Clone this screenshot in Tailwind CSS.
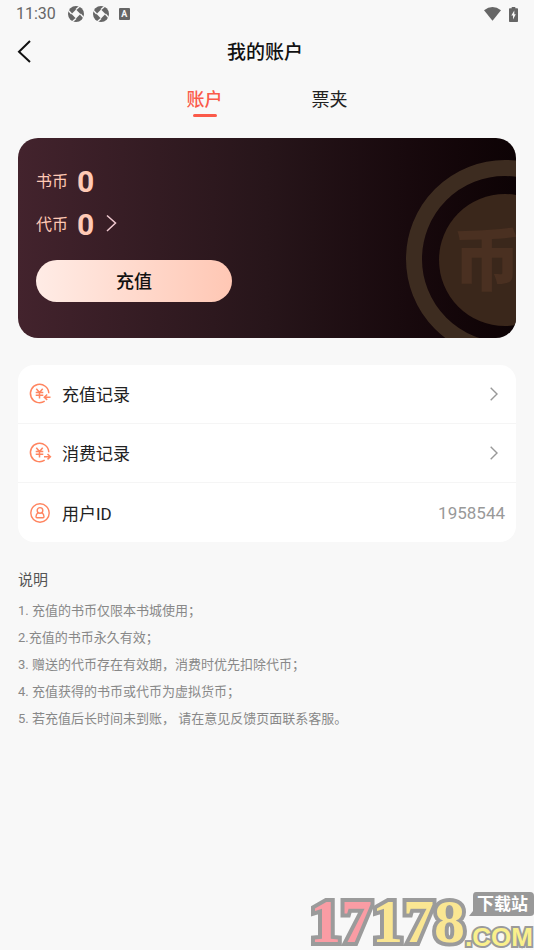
<!DOCTYPE html>
<html lang="zh-CN">
<head>
<meta charset="utf-8">
<meta name="viewport" content="width=device-width, initial-scale=1">
<title>我的账户</title>
<script src="https://cdn.jsdelivr.net/npm/@tailwindcss/browser@4"></script>
</head>
<body class="relative min-h-screen bg-[#f8f8f8] font-['Roboto','Noto_Sans_CJK_SC',sans-serif] text-[#222]">
  <!-- Status bar -->
  <div class="flex h-7 items-center justify-between px-4 text-[#666]">
    <div class="flex items-center gap-2">
      <span class="mr-1 text-base leading-7">11:30</span>
      <svg class="size-4" viewBox="0 0 16 16" aria-hidden="true"><circle cx="8" cy="8" r="8" fill="currentColor"/><path d="M8 3.600 12.400 8 8 12.400 3.600 8Z" fill="#f8f8f8"/><path d="M8 3.600 12 0M12.400 8 16 12M8 12.400 4 16M3.600 8 0 4" stroke="#f8f8f8" stroke-width="1.400"/></svg>
      <svg class="ml-px size-4" viewBox="0 0 16 16" aria-hidden="true"><circle cx="8" cy="8" r="8" fill="currentColor"/><path d="M8 3.600 12.400 8 8 12.400 3.600 8Z" fill="#f8f8f8"/><path d="M8 3.600 12 0M12.400 8 16 12M8 12.400 4 16M3.600 8 0 4" stroke="#f8f8f8" stroke-width="1.400"/></svg>
      <span class="ml-0.5 flex h-3 w-[11px] items-center justify-center rounded-[1px] bg-[#666] text-[9px] font-bold leading-3 text-[#f8f8f8]">A</span>
    </div>
    <div class="flex items-center gap-2">
      <svg class="h-[14px] w-[17px]" viewBox="0 0 17 14" fill="currentColor" aria-hidden="true"><path d="M0 3.200Q8.500-3 17 3.200L8.500 13.800Z"/></svg>
      <svg class="h-[15px] w-[9px]" viewBox="0 0 9 15" aria-hidden="true"><path fill="currentColor" d="M2.700 0h3.600v1.200H8.200q.8 0 .8.800v12.200q0 .8-.8.800H.8q-.8 0-.8-.8V2q0-.8.8-.8h1.900Z"/><path fill="#f8f8f8" d="M5.300 3.600 2.300 8.500H4v3.900L6.800 7.300H5.300Z"/></svg>
    </div>
  </div>

  <!-- Title bar -->
  <header class="grid h-12 grid-cols-[1fr_auto_1fr] items-center pr-5 pl-4">
    <button type="button" aria-label="返回" class="w-6 justify-self-start">
      <svg class="h-6 w-4" viewBox="0 0 16 24" fill="none" stroke="#111" stroke-width="2" aria-hidden="true"><path d="M14 1 3 11.800 14 22"/></svg>
    </button>
    <h1 class="pt-0.5 text-[19px] font-medium leading-7 text-[#111]">我的账户</h1>
  </header>

  <nav class="flex h-[62px] justify-center gap-[89px] pt-2.5 text-lg leading-7">
    <a href="#account" aria-current="page" class="flex flex-col items-center font-medium text-[#fb5a4a]">账户<span class="h-[3px] w-6 rounded-full bg-[#fb5a4a]"></span></a>
    <a href="#coupons">票夹</a>
  </nav>

  <main class="px-[18px]">
    <!-- Balance card -->
    <section id="account" class="relative overflow-hidden rounded-[20px] bg-linear-to-r from-[#43232d] via-[#27151a] to-[#0d0305] px-[18px] pt-7 pb-9 text-[#ffc9b5]">
      <svg class="absolute top-0 right-0 h-full w-[120px]" viewBox="0 0 120 200" aria-hidden="true">
        <circle cx="109" cy="121" r="91" fill="none" stroke="#3d2c20" stroke-width="16"/>
        <circle cx="109" cy="122" r="66" fill="#3a271b"/>
        <text x="57" y="147" font-size="68" font-weight="900" font-family="'Noto Sans CJK SC', sans-serif" fill="#4a3021">币</text>
      </svg>
      <div class="relative">
        <div class="flex h-[43px] items-start gap-[9px]"><span class="text-base leading-8">书币</span><b class="text-[30px] leading-8">0</b></div>
        <a href="#tokens" class="flex h-[43px] items-start gap-[9px]"><span class="text-base leading-8">代币</span><b class="text-[30px] leading-8">0</b>
          <svg class="mt-[5px] ml-0.5 h-[18px] w-3" viewBox="0 0 12 18" fill="none" stroke="#f0c9d0" stroke-width="1.500" aria-hidden="true"><path d="M2 1.500 10.500 9 2 17"/></svg></a>
        <button type="button" class="mt-2 h-[42px] w-[196px] rounded-full bg-linear-to-r from-[#ffece6] to-[#ffc7b4] pt-0.5 text-lg font-medium text-[#111]">充值</button>
      </div>
    </section>

    <!-- Records -->
    <section class="mt-[27px] divide-y divide-[#f5f5f5] overflow-hidden rounded-2xl bg-white text-[17px] leading-6">
      <a href="#recharges" class="flex h-[59px] items-center gap-3 pr-[18px] pl-3">
        <svg class="size-5 overflow-visible" viewBox="0 0 20 20" fill="none" stroke="#ff8560" stroke-width="1.500" aria-hidden="true"><path d="M18.800 9.200A9.200 9.200 0 1 0 14.700 17.200M6.300 4.800l3.200 3.700 3.200-3.700M5.700 8.500h7.600M5.700 11.200h7.600M9.500 8.500v6M20.500 13.200h-5.800M17.200 10.500l-2.900 2.700 2.900 2.700"/></svg>
        <span class="grow pt-0.5">充值记录</span>
        <svg class="h-[14px] w-2" viewBox="0 0 8 14" fill="none" stroke="#999" stroke-width="1.400" aria-hidden="true"><path d="M.7.7 7 7 .7 13.300"/></svg>
      </a>
      <a href="#spending" class="flex h-[59px] items-center gap-3 pr-[18px] pl-3">
        <svg class="size-5 overflow-visible" viewBox="0 0 20 20" fill="none" stroke="#ff8560" stroke-width="1.500" aria-hidden="true"><path d="M18.800 9.200A9.200 9.200 0 1 0 14.700 17.200M6.300 4.800l3.200 3.700 3.200-3.700M5.700 8.500h7.600M5.700 11.200h7.600M9.500 8.500v6M14 13.700h6M17.500 11l2.900 2.700-2.900 2.700"/></svg>
        <span class="grow pt-0.5">消费记录</span>
        <svg class="h-[14px] w-2" viewBox="0 0 8 14" fill="none" stroke="#999" stroke-width="1.400" aria-hidden="true"><path d="M.7.7 7 7 .7 13.300"/></svg>
      </a>
      <div class="flex h-[59px] items-center gap-3 pr-[11px] pl-3">
        <svg class="size-5" viewBox="0 0 20 20" fill="none" stroke="#ff8560" stroke-width="1.400" aria-hidden="true"><circle cx="10" cy="10" r="9.200"/><circle cx="10" cy="7.400" r="2.800"/><path d="M8.200 9.600Q6 10.800 6 13.800q0 1 1 1h6q1 0 1-1 0-3-2.200-4.200"/></svg>
        <span class="grow pt-0.5">用户ID</span>
        <span class="text-[#999]">1958544</span>
      </div>
    </section>

    <!-- Notes -->
    <section class="mt-[25px] text-[13px] leading-[27px] text-[#888]">
      <h2 class="mb-1 text-[15px] leading-[26px] text-[#555]">说明</h2>
      <p>1. 充值的书币仅限本书城使用；</p>
      <p>2.充值的书币永久有效；</p>
      <p>3. 赠送的代币存在有效期，消费时优先扣除代币；</p>
      <p>4. 充值获得的书币或代币为虚拟货币；</p>
      <p>5. 若充值后长时间未到账， 请在意见反馈页面联系客服。</p>
    </section>
  </main>

  <!-- Site badge -->
  <svg class="absolute right-0 bottom-0 h-[62px] w-[226px]" viewBox="0 0 226 62" role="img" aria-label="17178.com 下载站">
    <g stroke="#9b9b9b" stroke-width="8" paint-order="stroke" stroke-linejoin="miter" font-weight="700">
      <text x="2" y="54" font-size="62" font-family="'Liberation Serif',serif"><tspan fill="#fa9ca4">17</tspan><tspan fill="#fae692">178</tspan></text>
      <text x="157" y="58" font-size="26" stroke-width="4" fill="#faf08c" font-family="'Liberation Sans','Roboto',sans-serif">.COM</text>
    </g>
    <path d="M168 4h54q4 0 4 4v17q0 3-4 3h-61l4-5V8q0-4 3-4Z" fill="#999"/>
    <text x="169" y="22" font-size="17" font-weight="700" font-family="'Noto Sans CJK SC', sans-serif" fill="#fff">下载站</text>
  </svg>
</body>
</html>
